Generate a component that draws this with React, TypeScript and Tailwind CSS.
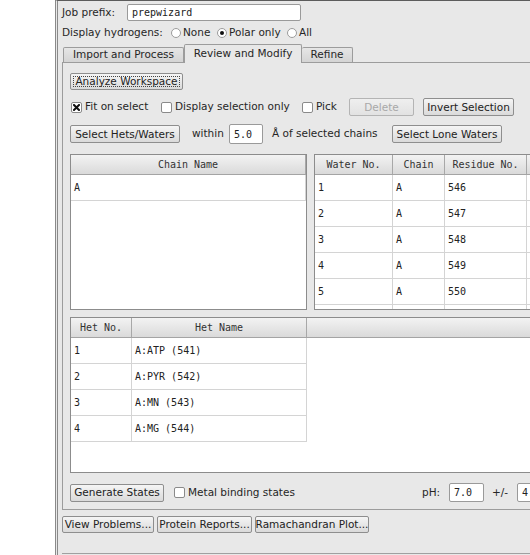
import React from "react";

type Col = { label: string; w: string };

const Check = ({ checked = false }: { checked?: boolean }) => (
  <span className="w-[11px] h-[11px] shrink-0 border border-[#8a8a8a] rounded-[2px] bg-white flex items-center justify-center">
    {checked && (
      <svg width="7" height="7" viewBox="0 0 7 7">
        <path d="M1 1L6 6M6 1L1 6" stroke="#111" strokeWidth="2" strokeLinecap="square" />
      </svg>
    )}
  </span>
);

const Radio = ({ on = false }: { on?: boolean }) => (
  <span className="w-[10px] h-[10px] shrink-0 rounded-full border border-[#9c9c9c] bg-white flex items-center justify-center">
    {on && <span className="w-[4px] h-[4px] rounded-full bg-[#111]" />}
  </span>
);

const Btn = ({
  children,
  className = "",
  disabled = false,
}: {
  children: React.ReactNode;
  className?: string;
  disabled?: boolean;
}) => (
  <button
    className={`relative shrink-0 flex items-center justify-center border rounded-[2px] bg-linear-to-b whitespace-nowrap leading-none text-[10.5px] ${
      disabled
        ? "border-[#b4b4b4] from-[#efefef] to-[#e2e2e2] text-[#a8a8a8]"
        : "border-[#8e8e8e] from-[#f5f5f5] to-[#dadada] text-[#222]"
    } ${className}`}
  >
    {children}
  </button>
);

const Field = ({ value, className = "" }: { value: string; className?: string }) => (
  <div
    className={`shrink-0 bg-white border border-[#9a9a9a] rounded-[2px] flex items-center pl-[4px] font-['DejaVu_Sans_Mono',monospace] text-[10px] text-[#222] ${className}`}
  >
    {value}
  </div>
);

const Header = ({ cols, fill = false }: { cols: Col[]; fill?: boolean }) => (
  <div className="flex h-[20px] shrink-0 bg-linear-to-b from-[#f3f3f3] to-[#dadada] border-b border-[#a4a4a4]">
    {cols.map((c, i) => (
      <div
        key={i}
        className={`${c.w} shrink-0 h-full border-r border-[#a8a8a8] flex items-center justify-center text-[#333]`}
      >
        {c.label}
      </div>
    ))}
    {fill && <div className="flex-1" />}
  </div>
);

const Rows = ({ cols, rows }: { cols: Col[]; rows: string[][] }) => (
  <div className="flex flex-col">
    {rows.map((r, ri) => (
      <div key={ri} className="flex h-[26px] shrink-0">
        {r.map((cell, i) => (
          <div
            key={i}
            className={`${cols[i].w} shrink-0 h-full border-r border-b border-[#d4d4d4] flex items-center pl-[3px] text-[#222]`}
          >
            {cell}
          </div>
        ))}
      </div>
    ))}
  </div>
);

const chainCols: Col[] = [{ label: "Chain Name", w: "w-[235px]" }];
const waterCols: Col[] = [
  { label: "Water No.", w: "w-[78px]" },
  { label: "Chain", w: "w-[52px]" },
  { label: "Residue No.", w: "w-[82px]" },
  { label: "", w: "w-[80px]" },
];
const hetCols: Col[] = [
  { label: "Het No.", w: "w-[61px]" },
  { label: "Het Name", w: "w-[175px]" },
];

const waters = [
  ["1", "A", "546", ""],
  ["2", "A", "547", ""],
  ["3", "A", "548", ""],
  ["4", "A", "549", ""],
  ["5", "A", "550", ""],
  ["", "", "", ""],
];

const hets = [
  ["1", "A:ATP (541)"],
  ["2", "A:PYR (542)"],
  ["3", "A:MN (543)"],
  ["4", "A:MG (544)"],
];

export default function App() {
  return (
    <div className="w-[530px] h-[555px] bg-white flex overflow-hidden font-['DejaVu_Sans',sans-serif] text-[10.5px] text-[#262626]">
      <div className="w-[55px] shrink-0" />
      <div className="w-[560px] h-[555px] shrink-0 flex flex-col bg-[#e8e8e8] border-l-[3px] border-double border-l-[#8a8a8a] border-t border-t-[#5c5c5c] pl-[4px]">
        {/* job prefix */}
        <div className="flex items-center h-[17px] mt-[3px]">
          <span className="w-[65px]">Job prefix:</span>
          <Field value="prepwizard" className="w-[174px] h-[17px]" />
        </div>

        {/* hydrogens */}
        <div className="flex items-center h-[14px] mt-[5px]">
          <span className="w-[109px]">Display hydrogens:</span>
          <Radio />
          <span className="ml-[2px] w-[34px]">None</span>
          <Radio on />
          <span className="ml-[2px] w-[58px]">Polar only</span>
          <Radio />
          <span className="ml-[2px]">All</span>
        </div>

        {/* tabs */}
        <div className="flex items-end h-[18px] mt-[4px] ml-[1px] relative z-10">
          <div className="w-[121px] h-[15px] border border-b-0 border-[#9c9c9c] rounded-t-[2px] bg-linear-to-b from-[#e6e6e6] to-[#d4d4d4] flex items-center justify-center">
            Import and Process
          </div>
          <div className="w-[118px] h-[19px] -mb-px border border-b-0 border-[#9c9c9c] rounded-t-[2px] bg-[#e8e8e8] flex items-center justify-center">
            Review and Modify
          </div>
          <div className="w-[51px] h-[15px] border border-b-0 border-l-0 border-[#9c9c9c] rounded-t-[2px] bg-linear-to-b from-[#e6e6e6] to-[#d4d4d4] flex items-center justify-center">
            Refine
          </div>
        </div>

        {/* tab panel */}
        <div className="h-[448px] shrink-0 border border-[#9c9c9c] pt-[10px] px-[7px] flex flex-col">
          <Btn className="w-[113px] h-[17px]">
            <span className="absolute inset-[2px] border border-dotted border-[#444]" />
            Analyze Workspace
          </Btn>

          <div className="flex items-center h-[18px] mt-[8px]">
            <div className="w-[91px] flex items-center gap-[3px] pl-[1px]">
              <Check checked />
              <span>Fit on select</span>
            </div>
            <div className="w-[141px] flex items-center gap-[3px]">
              <Check />
              <span>Display selection only</span>
            </div>
            <div className="w-[47px] flex items-center gap-[3px]">
              <Check />
              <span>Pick</span>
            </div>
            <Btn disabled className="w-[65px] h-[18px]">
              Delete
            </Btn>
            <Btn className="w-[91px] h-[18px] ml-[9px]">Invert Selection</Btn>
          </div>

          <div className="flex items-center h-[20px] mt-[8px]">
            <Btn className="w-[110px] h-[18px]">Select Hets/Waters</Btn>
            <span className="ml-[12px] w-[37px]">within</span>
            <Field value="5.0" className="w-[34px] h-[20px]" />
            <span className="ml-[9px] w-[120px] whitespace-nowrap">Å of selected chains</span>
            <Btn className="w-[110px] h-[18px]">Select Lone Waters</Btn>
          </div>

          <div className="flex gap-[7px] h-[156px] mt-[10px] font-['DejaVu_Sans_Mono',monospace] text-[10px]">
            <div className="w-[237px] shrink-0 border border-[#8c8c8c] bg-white overflow-hidden">
              <Header cols={chainCols} />
              <Rows cols={chainCols} rows={[["A"]]} />
            </div>
            <div className="flex-1 border border-[#8c8c8c] bg-white overflow-hidden">
              <Header cols={waterCols} fill />
              <Rows cols={waterCols} rows={waters} />
            </div>
          </div>

          <div className="h-[156px] mt-[7px] border border-[#8c8c8c] bg-white overflow-hidden font-['DejaVu_Sans_Mono',monospace] text-[10px]">
            <Header cols={hetCols} fill />
            <Rows cols={hetCols} rows={hets} />
          </div>

          <div className="flex items-center h-[19px] mt-[10px]">
            <Btn className="w-[94px] h-[18px]">Generate States</Btn>
            <div className="ml-[10px] w-[248px] flex items-center gap-[3px]">
              <Check />
              <span>Metal binding states</span>
            </div>
            <span className="w-[27px]">pH:</span>
            <Field value="7.0" className="w-[35px] h-[19px]" />
            <span className="ml-[8px] w-[25px]">+/-</span>
            <Field value="4.0" className="w-[35px] h-[19px]" />
          </div>
        </div>

        {/* bottom buttons */}
        <div className="flex items-center h-[17px] mt-[6px] gap-[3px]">
          <Btn className="w-[92px] h-[17px]">View Problems...</Btn>
          <Btn className="w-[95px] h-[17px]">Protein Reports...</Btn>
          <Btn className="w-[114px] h-[17px]">Ramachandran Plot...</Btn>
        </div>

        <div className="mt-auto h-[2px] border-t border-[#a0a0a0]" />
      </div>
    </div>
  );
}
